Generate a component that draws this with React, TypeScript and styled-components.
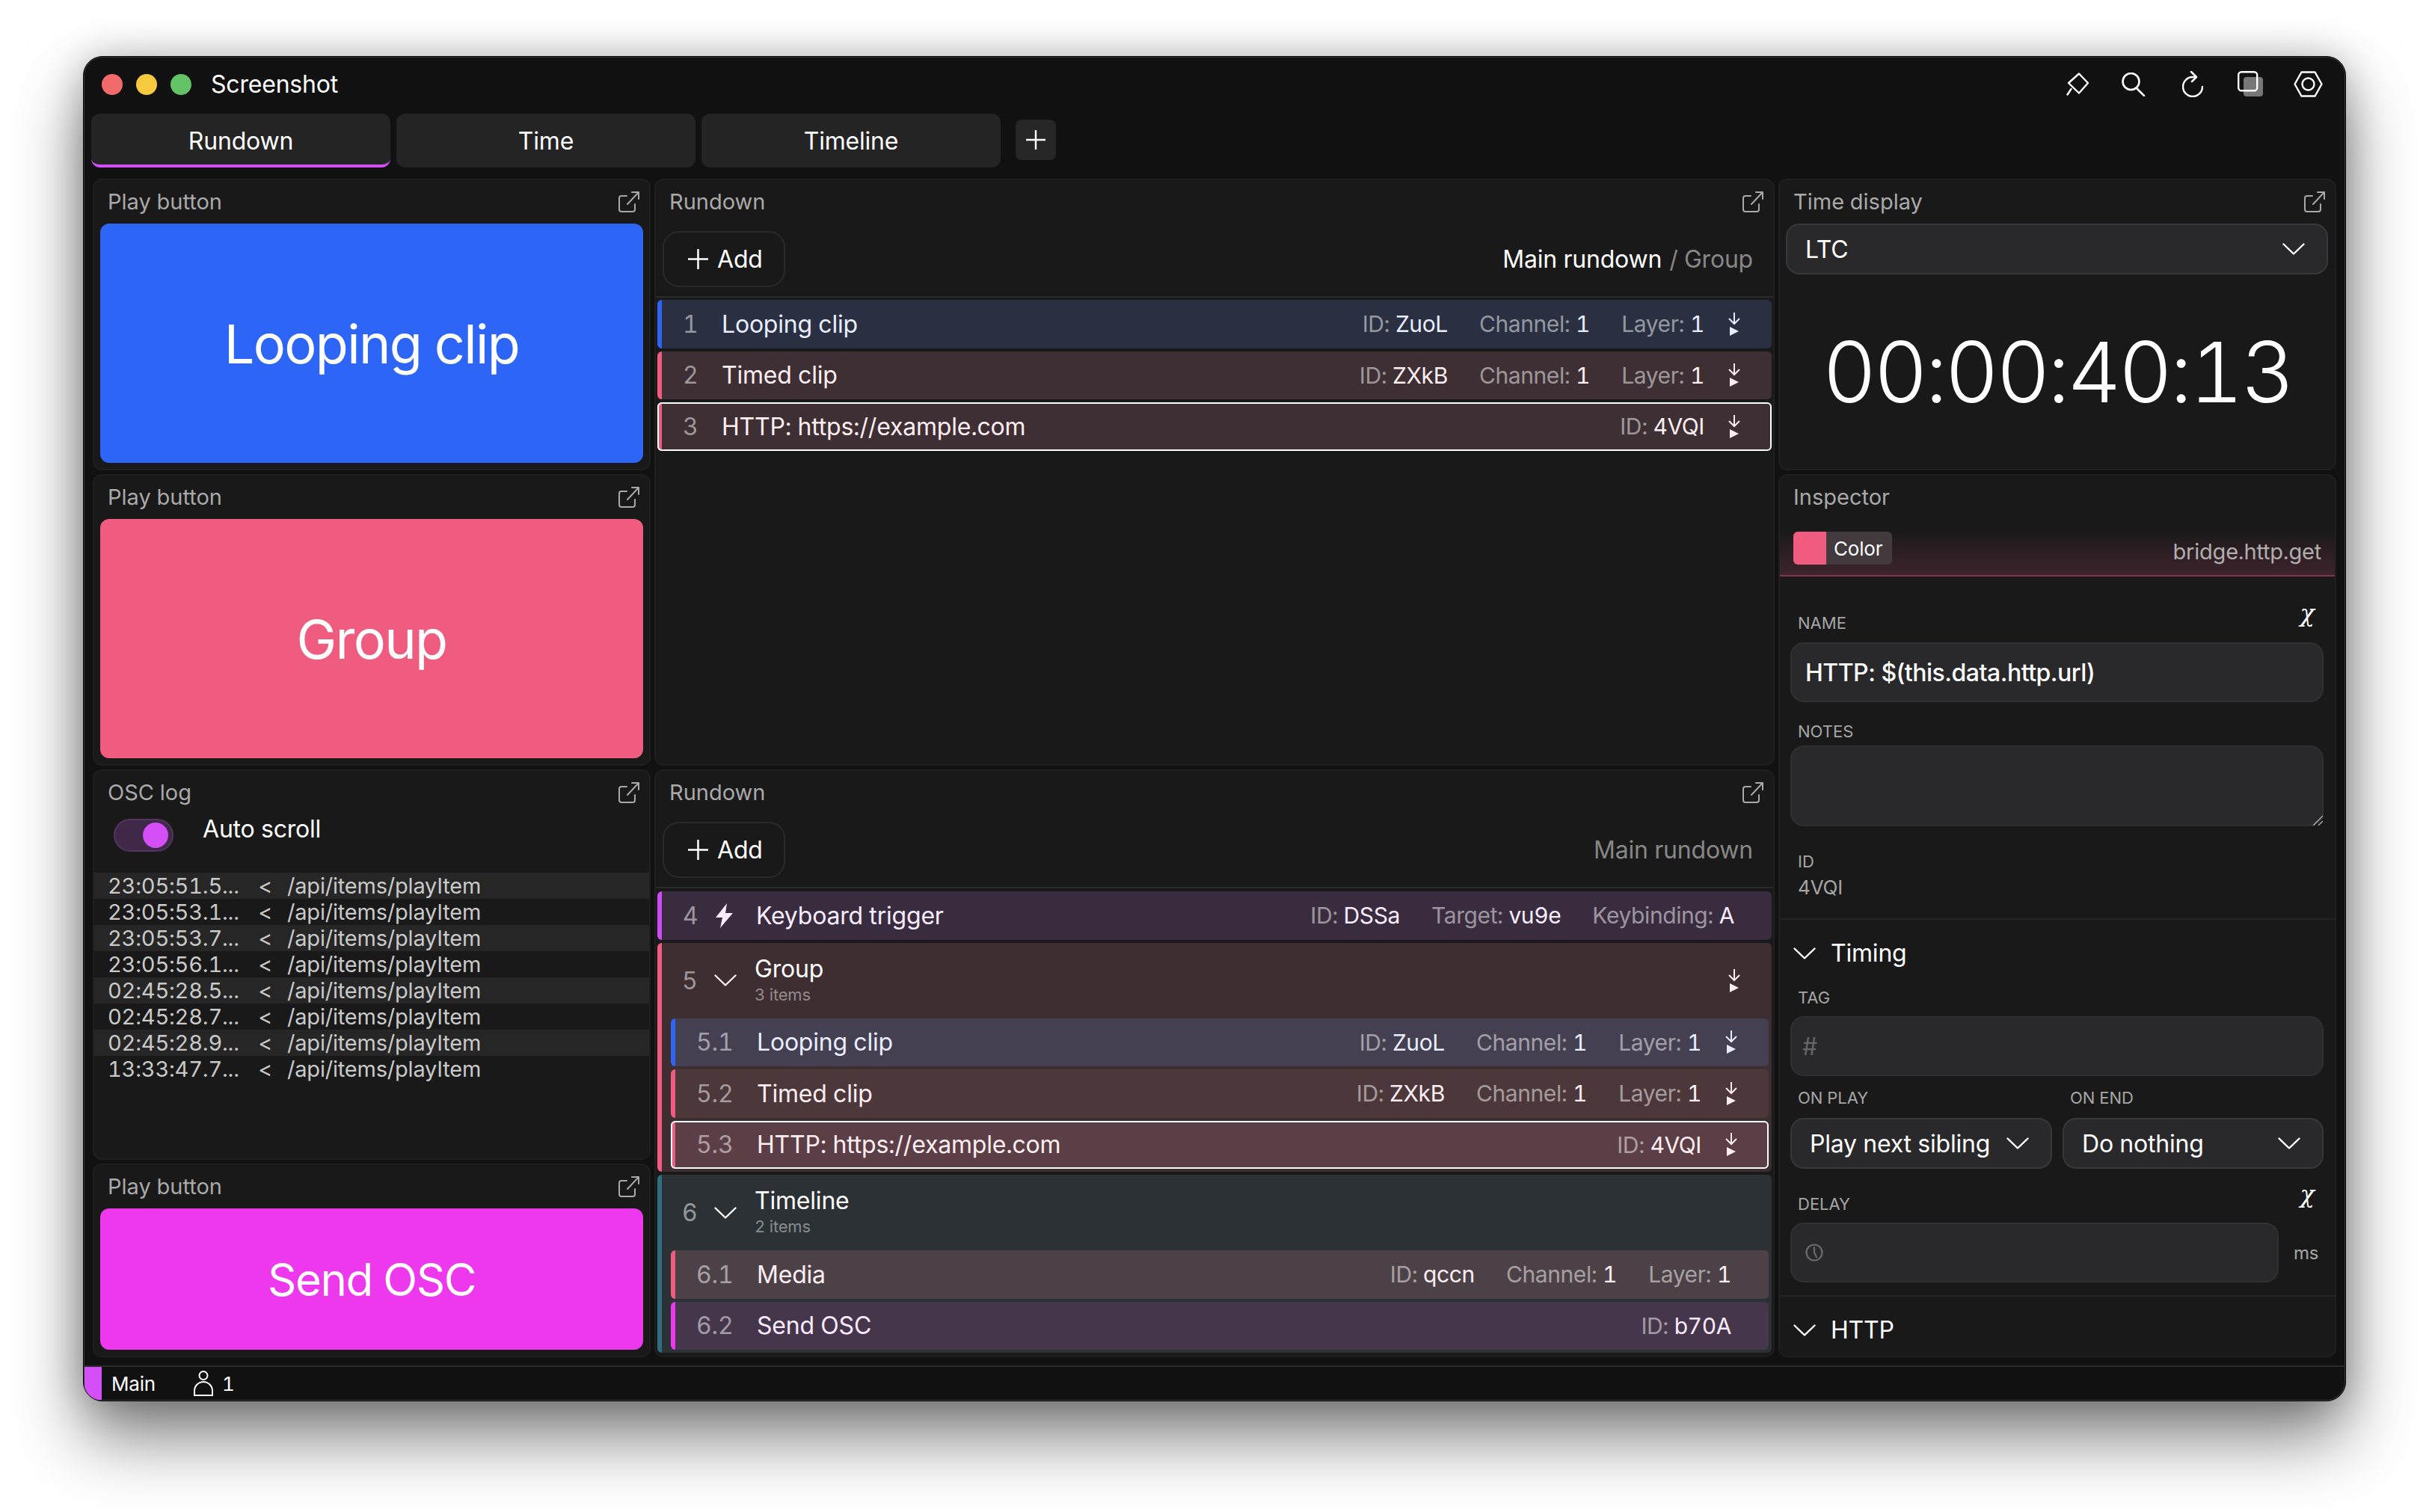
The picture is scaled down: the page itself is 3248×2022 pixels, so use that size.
import React from "react";
import styled, { createGlobalStyle } from "styled-components";

const GlobalStyle = createGlobalStyle`
  html, body {
    margin: 0;
    padding: 0;
    background: #ffffff;
  }
  * {
    box-sizing: border-box;
  }
  body {
    font-family: Inter, "Liberation Sans", sans-serif;
    font-variant-numeric: tabular-nums;
    letter-spacing: -0.2px;
    color: #ffffff;
  }
`;

const Page = styled.div`
  width: 3248px;
  height: 2022px;
  padding: 75px 0 0 111px;
  overflow: hidden;
  background: #ffffff;
`;

const Window = styled.div`
  width: 3026px;
  height: 1799px;
  display: flex;
  flex-direction: column;
  padding: 1px;
  background: #111111;
  border: 1px solid #000000;
  border-radius: 26px;
  box-shadow: inset 0 0 0 1px #3a3a3a, 0 48px 90px rgba(0, 0, 0, 0.5), 0 0 50px rgba(0, 0, 0, 0.22);
  overflow: hidden;
`;

const TitleBar = styled.div`
  height: 75px;
  flex: none;
  display: flex;
  align-items: center;
  padding: 0 8px 4px 23px;
`;

const Light = styled.span<{ $color: string }>`
  width: 28px;
  height: 28px;
  border-radius: 50%;
  margin-right: 18px;
  background: ${(p) => p.$color};
`;

const WindowTitle = styled.div`
  font-size: 32px;
  margin-left: 8px;
  flex: 1;
`;

const TitleIcon = styled.span<{ $width: number }>`
  width: ${(p) => p.$width}px;
  display: flex;
  justify-content: center;
`;

const TabBar = styled.div`
  height: 72px;
  flex: none;
  display: flex;
  gap: 8px;
  padding-left: 9px;
  margin-bottom: 15px;
`;

const Tab = styled.div<{ $active?: boolean }>`
  width: 400px;
  display: flex;
  align-items: center;
  justify-content: center;
  font-size: 32px;
  background: #242424;
  border-radius: 12px;
  border-bottom: 4px solid ${(p) => (p.$active ? "#d44ff8" : "transparent")};
  padding-top: 4px;
`;

const AddTab = styled.div`
  width: 54px;
  height: 54px;
  margin: 8px 0 0 12px;
  display: flex;
  align-items: center;
  justify-content: center;
  background: #262626;
  border-radius: 8px;
`;

const Board = styled.div`
  display: grid;
  grid-template-columns: 746px 1498px 746px;
  gap: 5px;
  height: 1576px;
  flex: none;
  padding-left: 11px;
`;

const Column = styled.div<{ $rows: string }>`
  display: grid;
  grid-template-rows: ${(p) => p.$rows};
  gap: 5px;
  min-height: 0;
`;

const Panel = styled.section`
  display: flex;
  flex-direction: column;
  min-height: 0;
  background: #191919;
  border: 2px solid #1f1f1f;
  border-radius: 12px;
  overflow: hidden;
`;

const PanelHead = styled.div`
  height: 58px;
  flex: none;
  display: flex;
  align-items: center;
  justify-content: space-between;
  padding: 0 13px 1px 18px;
  font-size: 29px;
  letter-spacing: 0;
  color: #a9a9a9;
`;

const PlayButton = styled.div<{ $color: string; $size: number; $tracking: number }>`
  flex: 1;
  margin: 0 8px 8px;
  display: flex;
  align-items: center;
  justify-content: center;
  border-radius: 12px;
  background: ${(p) => p.$color};
  font-size: ${(p) => p.$size}px;
  letter-spacing: ${(p) => p.$tracking}px;
`;

const ScrollRow = styled.div`
  height: 78px;
  flex: none;
  display: flex;
  gap: 39px;
  padding: 6px 0 0 26px;
  font-size: 32px;
  line-height: 32px;
`;

const ScrollLabel = styled.span`
  margin-top: -2px;
`;

const Toggle = styled.span`
  width: 80px;
  height: 44px;
  display: flex;
  align-items: center;
  justify-content: flex-end;
  padding-right: 5px;
  background: #402848;
  border: 2px solid #53365f;
  border-radius: 22px;
`;

const Knob = styled.span`
  width: 34px;
  height: 34px;
  border-radius: 50%;
  background: #d44ff8;
`;

const LogList = styled.div`
  margin: 0 -2px;
  display: flex;
  flex-direction: column;
`;

const LogRow = styled.div`
  height: 35px;
  display: flex;
  align-items: center;
  padding-left: 20px;
  font-size: 29px;
  color: #c9c9c9;
  &:nth-child(odd) {
    background: #262626;
  }
`;

const LogTime = styled.span`
  width: 201px;
`;

const LogDir = styled.span`
  width: 39px;
`;

const Toolbar = styled.div`
  height: 99px;
  flex: none;
  display: flex;
  align-items: flex-start;
  justify-content: space-between;
  padding: 10px 27px 0 9px;
  border-bottom: 2px solid #2a2a2a;
`;

const AddButton = styled.div`
  width: 164px;
  height: 75px;
  display: flex;
  align-items: center;
  gap: 12px;
  padding-left: 32px;
  font-size: 32px;
  border: 2px solid #2a2a2a;
  border-radius: 22px;
`;

const Crumbs = styled.div`
  height: 75px;
  display: flex;
  align-items: center;
  gap: 10px;
  font-size: 32px;
  color: #878787;
`;

const CrumbStrong = styled.span`
  color: #ffffff;
`;

const RowList = styled.div<{ $top: number }>`
  display: flex;
  flex-direction: column;
  gap: 4px;
  padding: ${(p) => p.$top}px 2px 0;
`;

const Row = styled.div<{ $bg: string; $strip: string; $selected?: boolean; $tint: string }>`
  height: 64.5px;
  flex: none;
  display: flex;
  align-items: center;
  padding: 0 50px 0 34px;
  border-radius: 6px;
  font-size: 32px;
  color: ${(p) => p.$tint};
  background: linear-gradient(to right, ${(p) => p.$strip} 6px, ${(p) => p.$bg} 6px);
  box-shadow: ${(p) => (p.$selected ? "inset 0 0 0 2px #ffffff" : "none")};
`;

const NestedList = styled.div`
  display: flex;
  flex-direction: column;
  gap: 4px;
  padding: 0 4px 4px 18px;
`;

const GroupBox = styled.div<{ $bg: string; $strip: string }>`
  display: flex;
  flex-direction: column;
  border-radius: 6px;
  background: linear-gradient(to right, ${(p) => p.$strip} 6px, ${(p) => p.$bg} 6px);
`;

const GroupHead = styled.div<{ $tint: string }>`
  height: 101px;
  display: flex;
  align-items: center;
  padding: 0 50px 0 33px;
  font-size: 32px;
  color: ${(p) => p.$tint};
`;

const Num = styled.span<{ $width: number }>`
  width: ${(p) => p.$width}px;
  flex: none;
  color: rgba(255, 255, 255, 0.5);
`;

const RowTitle = styled.span`
  flex: 1;
  white-space: nowrap;
`;

const GroupText = styled.div`
  flex: 1;
  display: flex;
  flex-direction: column;
  gap: 2px;
  margin: -3px 0 0 24px;
  font-size: 32px;
  line-height: 38px;
  color: #ffffff;
`;

const GroupCount = styled.span`
  font-size: 22px;
  line-height: 26px;
  color: rgba(255, 255, 255, 0.45);
`;

const BoltWrap = styled.span`
  width: 54px;
  flex: none;
  display: flex;
`;

const Meta = styled.div`
  display: flex;
  gap: 42px;
  font-size: 30px;
  letter-spacing: -0.4px;
`;

const MetaLabel = styled.span`
  color: rgba(255, 255, 255, 0.5);
`;

const ActionIcon = styled.svg`
  width: 16px;
  height: 31px;
  flex: none;
  margin: 0 -8px 0 32px;
`;

const TimePanelBody = styled.div`
  flex: 1;
  display: flex;
  align-items: center;
  justify-content: center;
  font-size: 112px;
  font-weight: 300;
  letter-spacing: -3.8px;
`;

const SelectBox = styled.div<{ $height: number }>`
  height: ${(p) => p.$height}px;
  display: flex;
  align-items: center;
  justify-content: space-between;
  padding: 0 29px 0 24px;
  font-size: 32px;
  background: #29292c;
  border: 2px solid #38383b;
  border-radius: 18px;
`;

const TimeSelect = styled.div`
  margin: 0 9px 0 8px;
  flex: none;
`;

const InspectorStrip = styled.div`
  height: 77px;
  flex: none;
  display: flex;
  justify-content: space-between;
  padding: 17px 18px 0;
  background: linear-gradient(to bottom, #191919 18%, #3e242c 100%);
  border-bottom: 2px solid #7f3449;
`;

const ColorChip = styled.div`
  width: 132px;
  height: 44px;
  display: flex;
  align-items: center;
  overflow: hidden;
  border-radius: 6px;
  background: #423a3d;
  font-size: 26px;
`;

const ColorSwatch = styled.span`
  width: 44px;
  height: 44px;
  margin-right: 10px;
  background: #ef5c80;
`;

const BridgeName = styled.span`
  font-size: 29px;
  line-height: 54px;
  color: #b2aeae;
`;

const Fields = styled.div`
  padding: 0 15px 0 14px;
  display: flex;
  flex-direction: column;
`;

const LabelRow = styled.div<{ $top: number; $bottom: number }>`
  height: 26px;
  flex: none;
  display: flex;
  justify-content: space-between;
  align-items: center;
  padding-left: 10px;
  margin: ${(p) => p.$top}px 0 ${(p) => p.$bottom}px;
  font-size: 22px;
  letter-spacing: 0;
  color: #a6a6a6;
`;

const VarMark = styled.span`
  margin: -26px 12px 0 0;
  font-family: "DejaVu Serif", serif;
  font-style: italic;
  font-size: 32px;
  line-height: 26px;
  color: #ffffff;
`;

const TextField = styled.input`
  width: 100%;
  height: 80px;
  display: block;
  padding: 0 18px;
  font-family: inherit;
  font-size: 32px;
  font-weight: 500;
  letter-spacing: -0.5px;
  color: #ffffff;
  background: #29292b;
  border: 2px solid #303033;
  border-radius: 18px;
  outline: none;
  &::placeholder {
    color: #666668;
    font-weight: 400;
  }
`;

const TagField = styled(TextField)`
  padding: 0 14px;
`;

const NotesWrap = styled.div`
  position: relative;
`;

const NotesField = styled.textarea`
  width: 100%;
  height: 108px;
  display: block;
  background: #29292b;
  border: 2px solid #303033;
  border-radius: 18px;
  outline: none;
  resize: none;
`;

const ResizeGrip = styled.svg`
  position: absolute;
  right: 1px;
  bottom: 1px;
  width: 14px;
  height: 14px;
`;

const IdValue = styled.div`
  margin: 6px 0 0 10px;
  font-size: 26px;
  line-height: 32px;
  color: #a6a6a6;
`;

const Divider = styled.div<{ $top: number }>`
  height: 2px;
  flex: none;
  margin-top: ${(p) => p.$top}px;
  background: #242424;
`;

const SectionHead = styled.div`
  height: 32px;
  flex: none;
  display: flex;
  align-items: center;
  gap: 20px;
  margin: 29px 0 0 18px;
  font-size: 32px;
  line-height: 32px;
`;

const TwoCols = styled.div`
  display: grid;
  grid-template-columns: 350px 349px;
  gap: 14px;
`;

const DelayRow = styled.div`
  display: flex;
  align-items: center;
  gap: 20px;
`;

const DelayField = styled.div`
  width: 653px;
  height: 80px;
  display: flex;
  align-items: center;
  padding-left: 18px;
  background: #29292b;
  border: 2px solid #303033;
  border-radius: 18px;
`;

const Unit = styled.span`
  font-size: 24px;
  color: #a6a6a6;
`;

const StatusBar = styled.div`
  flex: 1;
  margin-top: 11px;
  display: flex;
  align-items: center;
  font-size: 26px;
  border-top: 2px solid #2a2a2a;
`;

const StatusMark = styled.span`
  width: 23px;
  align-self: stretch;
  background: #d44ff8;
`;

const StatusName = styled.span`
  margin: 0 51px 0 13px;
`;

const StatusUsers = styled.span`
  display: flex;
  align-items: center;
  gap: 12px;
`;

const Chevron = () => (
  <svg width="30" height="16" viewBox="0 0 30 16" fill="none" stroke="currentColor" strokeWidth="2.4" strokeLinecap="round" strokeLinejoin="round">
    <path d="M1.5 1.5 15 14.5 28.5 1.5" />
  </svg>
);

const PlusIcon = ({ size }: { size: number }) => (
  <svg width={size} height={size} viewBox="0 0 28 28" fill="none" stroke="#ffffff" strokeWidth="2.6">
    <path d="M14 0v28M0 14h28" />
  </svg>
);

const PopOut = () => (
  <svg width="28" height="28" viewBox="0 0 28 28" fill="none" stroke="#a9a9a9" strokeWidth="2" strokeLinecap="round" strokeLinejoin="round">
    <path d="M11 6H4a3 3 0 0 0-3 3v15a3 3 0 0 0 3 3h15a3 3 0 0 0 3-3v-7" />
    <path d="M12 17 27 1M18 1h9v9" />
  </svg>
);

const PlayNext = () => (
  <ActionIcon viewBox="0 0 16 31" fill="none" stroke="currentColor" strokeWidth="2">
    <path d="M8 0v15M1 8l7 7 7-7" />
    <path d="M2 19l12 6-12 6z" fill="currentColor" stroke="none" />
  </ActionIcon>
);

const Bolt = () => (
  <svg width="23" height="33" viewBox="0 0 23 33" fill="#f8ecff">
    <path d="M15 0 0 19h9L6 33l17-20H13z" />
  </svg>
);

const ClockIcon = () => (
  <svg width="24" height="24" viewBox="0 0 24 24" fill="none" stroke="#6a6a6c" strokeWidth="2.2" strokeLinecap="round">
    <circle cx="12" cy="12" r="10.5" />
    <path d="M12 5v7l3 6" />
  </svg>
);

const PersonIcon = () => (
  <svg width="26" height="34" viewBox="0 0 26 34" fill="none" stroke="#ffffff" strokeWidth="2">
    <circle cx="13" cy="6.5" r="5.5" />
    <path d="M1 33v-6a12 12 0 0 1 24 0v6z" />
  </svg>
);

const TitleIcons = () => (
  <>
    <TitleIcon $width={75}>
      <svg width="30" height="31" viewBox="0 0 30 31" fill="none" stroke="#ffffff" strokeWidth="2.4" strokeLinejoin="round" strokeLinecap="round">
        <path d="M17 1.5 29 14 17 27.5 3 14z" />
        <path d="M6.5 22 1.5 29.5" />
      </svg>
    </TitleIcon>
    <TitleIcon $width={75}>
      <svg width="32" height="32" viewBox="0 0 32 32" fill="none" stroke="#ffffff" strokeWidth="2.6" strokeLinecap="round">
        <circle cx="12.5" cy="12" r="11" />
        <path d="M20 21l10 10" />
      </svg>
    </TitleIcon>
    <TitleIcon $width={83}>
      <svg width="28" height="35" viewBox="0 0 28 35" fill="none" stroke="#ffffff" strokeWidth="2.5" strokeLinecap="round" strokeLinejoin="round">
        <path d="M27 21a13 13 0 1 1-13-13h4" />
        <path d="M12 1l7 7-6 6" />
      </svg>
    </TitleIcon>
    <TitleIcon $width={73}>
      <svg width="35" height="35" viewBox="0 0 35 35" fill="none">
        <rect x="8" y="8" width="26" height="26" rx="4" fill="#777777" />
        <rect x="1.2" y="1.2" width="25" height="25" rx="4" stroke="#ffffff" strokeWidth="2.4" />
      </svg>
    </TitleIcon>
    <TitleIcon $width={81}>
      <svg width="39" height="35" viewBox="0 0 39 35" fill="none" stroke="#ffffff" strokeWidth="2.4" strokeLinejoin="round">
        <path d="M1.5 17.5 10.5 1.5h18l9 16-9 16h-18z" />
        <circle cx="19.5" cy="17.5" r="8" />
      </svg>
    </TitleIcon>
  </>
);

type Field = [string, string];

const MetaFields = ({ fields }: { fields: Field[] }) => (
  <Meta>
    {fields.map(([label, value]) => (
      <span key={label}>
        <MetaLabel>{label}: </MetaLabel>
        {value}
      </span>
    ))}
  </Meta>
);

const clip = (id: string): Field[] => [
  ["ID", id],
  ["Channel", "1"],
  ["Layer", "1"],
];

const BLUE = { $bg: "#2a3041", $strip: "#2d66f6", $tint: "#e9eeff" };
const RED = { $bg: "#3d2f33", $strip: "#ef5c80", $tint: "#fdeef2" };

const logLines = [
  "23:05:51.5...",
  "23:05:53.1...",
  "23:05:53.7...",
  "23:05:56.1...",
  "02:45:28.5...",
  "02:45:28.7...",
  "02:45:28.9...",
  "13:33:47.7...",
];

function App() {
  return (
    <Page>
      <GlobalStyle />
      <Window>
        <TitleBar>
          <Light $color="#f26a6a" />
          <Light $color="#f6c93f" />
          <Light $color="#62c466" />
          <WindowTitle>Screenshot</WindowTitle>
          <TitleIcons />
        </TitleBar>
        <TabBar>
          <Tab $active>Rundown</Tab>
          <Tab>Time</Tab>
          <Tab>Timeline</Tab>
          <AddTab>
            <PlusIcon size={26} />
          </AddTab>
        </TabBar>
        <Board>
          <Column $rows="390px 390px 522px 259px">
            <Panel>
              <PanelHead>
                Play button
                <PopOut />
              </PanelHead>
              <PlayButton $color="#2d66f6" $size={72} $tracking={-1.7}>
                Looping clip
              </PlayButton>
            </Panel>
            <Panel>
              <PanelHead>
                Play button
                <PopOut />
              </PanelHead>
              <PlayButton $color="#ef5c80" $size={72} $tracking={-1.7}>
                Group
              </PlayButton>
            </Panel>
            <Panel>
              <PanelHead>
                OSC log
                <PopOut />
              </PanelHead>
              <ScrollRow>
                <Toggle>
                  <Knob />
                </Toggle>
                <ScrollLabel>Auto scroll</ScrollLabel>
              </ScrollRow>
              <LogList>
                {logLines.map((time) => (
                  <LogRow key={time}>
                    <LogTime>{time}</LogTime>
                    <LogDir>&lt;</LogDir>
                    <span>/api/items/playItem</span>
                  </LogRow>
                ))}
              </LogList>
            </Panel>
            <Panel>
              <PanelHead>
                Play button
                <PopOut />
              </PanelHead>
              <PlayButton $color="#ee38ee" $size={60} $tracking={-1.5}>
                Send OSC
              </PlayButton>
            </Panel>
          </Column>

          <Column $rows="785px 786px">
            <Panel>
              <PanelHead>
                Rundown
                <PopOut />
              </PanelHead>
              <Toolbar>
                <AddButton>
                  <PlusIcon size={27} />
                  Add
                </AddButton>
                <Crumbs>
                  <CrumbStrong>Main rundown</CrumbStrong> / Group
                </Crumbs>
              </Toolbar>
              <RowList $top={3}>
                <Row {...BLUE}>
                  <Num $width={52}>1</Num>
                  <RowTitle>Looping clip</RowTitle>
                  <MetaFields fields={clip("ZuoL")} />
                  <PlayNext />
                </Row>
                <Row {...RED}>
                  <Num $width={52}>2</Num>
                  <RowTitle>Timed clip</RowTitle>
                  <MetaFields fields={clip("ZXkB")} />
                  <PlayNext />
                </Row>
                <Row {...RED} $selected>
                  <Num $width={52}>3</Num>
                  <RowTitle>HTTP: https://example.com</RowTitle>
                  <MetaFields fields={[["ID", "4VQI"]]} />
                  <PlayNext />
                </Row>
              </RowList>
            </Panel>
            <Panel>
              <PanelHead>
                Rundown
                <PopOut />
              </PanelHead>
              <Toolbar>
                <AddButton>
                  <PlusIcon size={27} />
                  Add
                </AddButton>
                <Crumbs>Main rundown</Crumbs>
              </Toolbar>
              <RowList $top={4}>
                <Row $bg="#3a2c3f" $strip="#cf4bf5" $tint="#f8ecff">
                  <Num $width={44}>4</Num>
                  <BoltWrap>
                    <Bolt />
                  </BoltWrap>
                  <RowTitle>Keyboard trigger</RowTitle>
                  <MetaFields
                    fields={[
                      ["ID", "DSSa"],
                      ["Target", "vu9e"],
                      ["Keybinding", "A"],
                    ]}
                  />
                </Row>
                <GroupBox $bg="#3e2e31" $strip="#ef5c80">
                  <GroupHead $tint="#fdeef2">
                    <Num $width={43}>5</Num>
                    <Chevron />
                    <GroupText>
                      Group
                      <GroupCount>3 items</GroupCount>
                    </GroupText>
                    <PlayNext />
                  </GroupHead>
                  <NestedList>
                    <Row $bg="#453f52" $strip="#2d66f6" $tint="#e9eeff">
                      <Num $width={81}>5.1</Num>
                      <RowTitle>Looping clip</RowTitle>
                      <MetaFields fields={clip("ZuoL")} />
                      <PlayNext />
                    </Row>
                    <Row $bg="#4c373b" $strip="#ef5c80" $tint="#fdeef2">
                      <Num $width={81}>5.2</Num>
                      <RowTitle>Timed clip</RowTitle>
                      <MetaFields fields={clip("ZXkB")} />
                      <PlayNext />
                    </Row>
                    <Row $bg="#5c3e46" $strip="#ef5c80" $tint="#fdeef2" $selected>
                      <Num $width={81}>5.3</Num>
                      <RowTitle>HTTP: https://example.com</RowTitle>
                      <MetaFields fields={[["ID", "4VQI"]]} />
                      <PlayNext />
                    </Row>
                  </NestedList>
                </GroupBox>
                <GroupBox $bg="#2c3135" $strip="#2d6f80">
                  <GroupHead $tint="#ffffff">
                    <Num $width={43}>6</Num>
                    <Chevron />
                    <GroupText>
                      Timeline
                      <GroupCount>2 items</GroupCount>
                    </GroupText>
                  </GroupHead>
                  <NestedList>
                    <Row $bg="#4d4148" $strip="#ef5c80" $tint="#fdeef2">
                      <Num $width={81}>6.1</Num>
                      <RowTitle>Media</RowTitle>
                      <MetaFields fields={clip("qccn")} />
                    </Row>
                    <Row $bg="#46364c" $strip="#ee38ee" $tint="#fbeaff">
                      <Num $width={81}>6.2</Num>
                      <RowTitle>Send OSC</RowTitle>
                      <MetaFields fields={[["ID", "b70A"]]} />
                    </Row>
                  </NestedList>
                </GroupBox>
              </RowList>
            </Panel>
          </Column>

          <Column $rows="390px 1181px">
            <Panel>
              <PanelHead>
                Time display
                <PopOut />
              </PanelHead>
              <TimeSelect>
                <SelectBox $height={68}>
                  LTC
                  <Chevron />
                </SelectBox>
              </TimeSelect>
              <TimePanelBody>00:00:40:13</TimePanelBody>
            </Panel>
            <Panel>
              <PanelHead>Inspector</PanelHead>
              <InspectorStrip>
                <ColorChip>
                  <ColorSwatch />
                  Color
                </ColorChip>
                <BridgeName>bridge.http.get</BridgeName>
              </InspectorStrip>
              <Fields>
                <LabelRow $top={49} $bottom={13}>
                  NAME
                  <VarMark>χ</VarMark>
                </LabelRow>
                <TextField readOnly value="HTTP: $(this.data.http.url)" />
                <LabelRow $top={26} $bottom={6}>
                  NOTES
                </LabelRow>
                <NotesWrap>
                  <NotesField readOnly />
                  <ResizeGrip viewBox="0 0 14 14" fill="none" stroke="#b0b0b0" strokeWidth="1.4">
                    <path d="M1 14 14 1M8 14l6-6" />
                  </ResizeGrip>
                </NotesWrap>
                <LabelRow $top={34} $bottom={0}>
                  ID
                </LabelRow>
                <IdValue>4VQI</IdValue>
              </Fields>
              <Divider $top={25} />
              <SectionHead>
                <Chevron />
                Timing
              </SectionHead>
              <Fields>
                <LabelRow $top={30} $bottom={12}>
                  TAG
                </LabelRow>
                <TagField readOnly placeholder="#" />
                <TwoCols>
                  <div>
                    <LabelRow $top={16} $bottom={14}>
                      ON PLAY
                    </LabelRow>
                    <SelectBox $height={68}>
                      Play next sibling
                      <Chevron />
                    </SelectBox>
                  </div>
                  <div>
                    <LabelRow $top={16} $bottom={14}>
                      ON END
                    </LabelRow>
                    <SelectBox $height={68}>
                      Do nothing
                      <Chevron />
                    </SelectBox>
                  </div>
                </TwoCols>
                <LabelRow $top={34} $bottom={12}>
                  DELAY
                  <VarMark>χ</VarMark>
                </LabelRow>
                <DelayRow>
                  <DelayField>
                    <ClockIcon />
                  </DelayField>
                  <Unit>ms</Unit>
                </DelayRow>
              </Fields>
              <Divider $top={17} />
              <SectionHead>
                <Chevron />
                HTTP
              </SectionHead>
            </Panel>
          </Column>
        </Board>
        <StatusBar>
          <StatusMark />
          <StatusName>Main</StatusName>
          <StatusUsers>
            <PersonIcon />1
          </StatusUsers>
        </StatusBar>
      </Window>
    </Page>
  );
}

export default App;
